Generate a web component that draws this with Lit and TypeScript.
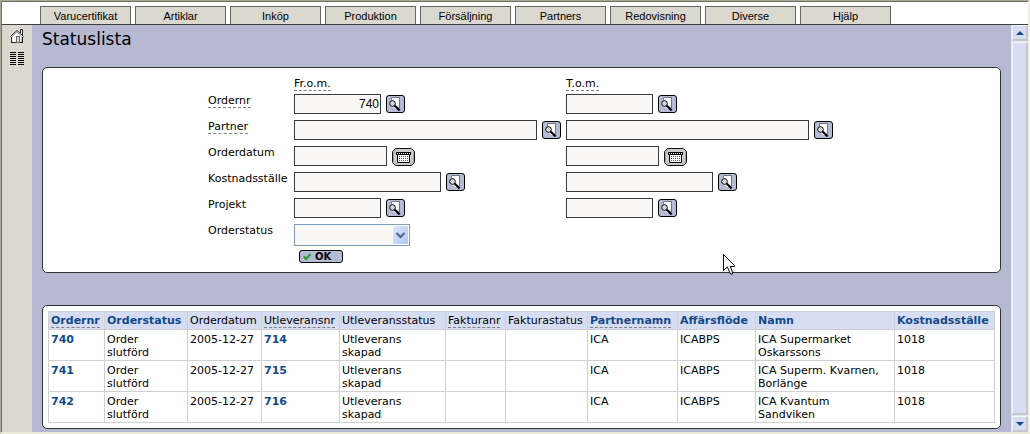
import { LitElement, html, css, svg, nothing } from "lit";
import { customElement } from "lit/decorators.js";
import { classMap } from "lit/directives/class-map.js";

const TABS = ["Varucertifikat", "Artiklar", "Inköp", "Produktion", "Försäljning", "Partners", "Redovisning", "Diverse", "Hjälp"];

interface Field {
  id: string;
  label: string;
  hint?: boolean;
  size: "short" | "date" | "medium" | "long";
  from?: string;
}

const FIELDS: Field[] = [
  { id: "ordernr", label: "Ordernr", hint: true, size: "short", from: "740" },
  { id: "partner", label: "Partner", hint: true, size: "long" },
  { id: "orderdatum", label: "Orderdatum", size: "date" },
  { id: "kostnadsstalle", label: "Kostnadsställe", size: "medium" },
  { id: "projekt", label: "Projekt", size: "short" },
];

interface Column {
  title: string;
  width: number;
  sortable?: boolean;
  hint?: boolean;
  link?: boolean;
}

const COLUMNS: Column[] = [
  { title: "Ordernr", width: 56, sortable: true, hint: true, link: true },
  { title: "Orderstatus", width: 83, sortable: true },
  { title: "Orderdatum", width: 74 },
  { title: "Utleveransnr", width: 78, hint: true, link: true },
  { title: "Utleveransstatus", width: 106 },
  { title: "Fakturanr", width: 60, hint: true },
  { title: "Fakturastatus", width: 82 },
  { title: "Partnernamn", width: 90, sortable: true, hint: true },
  { title: "Affärsflöde", width: 78, sortable: true },
  { title: "Namn", width: 139, sortable: true },
  { title: "Kostnadsställe", width: 100, sortable: true },
];

const ROWS: string[][] = [
  ["740", "Order\nslutförd", "2005-12-27", "714", "Utleverans\nskapad", "", "", "ICA", "ICABPS", "ICA Supermarket\nOskarssons", "1018"],
  ["741", "Order\nslutförd", "2005-12-27", "715", "Utleverans\nskapad", "", "", "ICA", "ICABPS", "ICA Superm. Kvarnen,\nBorlänge", "1018"],
  ["742", "Order\nslutförd", "2005-12-27", "716", "Utleverans\nskapad", "", "", "ICA", "ICABPS", "ICA Kvantum\nSandviken", "1018"],
];

const searchIcon = html`<svg width="19" height="18" viewBox="0 0 19 18" aria-hidden="true">
  <rect x="0.5" y="0.5" width="18" height="17" rx="2.5" fill="#b5bbd3" stroke="#000" />
  <path d="M6 3h7v11H9L6 11z" fill="#fff" />
  <path d="M5.5 5V2.5H13.5V13" fill="none" stroke="#777" />
  <circle cx="6.5" cy="8.5" r="2.8" fill="#eceeee" stroke="#000" />
  <path d="M5 8h1v1H5zM7 8h1v1H7zM6 7h1v1H6zM6 9h1v1H6z" fill="#c2c8c8" />
  <path d="M8.5 10.5L13.7 15.4" stroke="#000" stroke-width="2.2" />
</svg>`;

const dots: number[][] = [];
for (let y = 8; y <= 12; y += 2) for (let x = 8; x <= 16; x += 2) dots.push([x, y]);

const calendarIcon = html`<svg width="23" height="18" viewBox="0 0 23 18" aria-hidden="true">
  <rect x="0.5" y="0.5" width="22" height="17" rx="4.5" fill="#c9cacf" stroke="#111" />
  <path d="M1.5 13V5Q1.5 1.5 5 1.5M21.5 5V13Q21.5 16.5 18 16.5" fill="none" stroke="#a4a5a9" />
  <path d="M5.5 6.5h12v8h-12z" fill="#fff" stroke="#000" />
  <path d="M4 4h15v3H4z" fill="#000" />
  <path d="M5 5.5h13" stroke="#fff" stroke-dasharray="1 1" />
  ${dots.map(([x, y]) => svg`<rect x=${x - 1} y=${y} width="1" height="1" fill="#2f5fd0" />`)}
</svg>`;

const homeIcon = html`<svg width="15" height="15" viewBox="0 0 15 15" aria-hidden="true">
  <path d="M2 8V14H13V8L7.5 2z" fill="#f4f4f2" />
  <path d="M10.5 4V0.5H12.5V6" fill="#fff" stroke="#222" />
  <path d="M0.5 7.5L7 1.5L13.5 7.5" fill="none" stroke="#222" />
  <path d="M1.5 8.5L7 3L12.5 8.5" fill="none" stroke="#aaa" />
  <path d="M1.5 8V13.5M12.5 8V14M1 13.5H13" stroke="#222" fill="none" />
  <path d="M11.5 8.5V13" stroke="#bbb" />
  <rect x="6.5" y="7.5" width="3" height="6" fill="#d8d8d8" stroke="#666" />
</svg>`;

const listIcon = html`<svg width="14" height="13" viewBox="0 0 14 13" aria-hidden="true">
  ${[0, 2, 4, 6, 8, 10, 12].map((y) => svg`<path d=${`M0 ${y}h6v1H0zM8 ${y}h6v1H8z`} fill="#000" />`)}
</svg>`;

@customElement("app-root")
class AppRoot extends LitElement {
  static styles = css`
    :host {
      display: block;
      color: #000;
      font: 11px/13px "DejaVu Sans", Verdana, sans-serif;
    }
    .frame {
      box-sizing: border-box;
      min-height: 100vh;
      display: flex;
      flex-direction: column;
      border-style: solid;
      border-width: 1px 2px 2px 1px;
      border-color: #aca899 #f1efe2 #ece9d8 #aca899;
    }
    .window {
      flex: 1;
      display: flex;
      flex-direction: column;
      border-top: 1px solid #716f64;
      border-left: 1px solid #716f64;
    }
    .tabs {
      display: flex;
      gap: 4px;
      padding: 4px 0 0 38px;
      background: #fff;
      border-bottom: 1px solid #3f3f3f;
    }
    .tab {
      box-sizing: border-box;
      width: 91px;
      height: 18px;
      border: 1px solid #63665f;
      border-bottom: 0;
      background: #dbd8d0;
      color: #000;
      font: 11px/18px "Liberation Sans", Arial, sans-serif;
      text-align: center;
      text-decoration: none;
    }
    .body { flex: 1; display: flex; }
    .side {
      width: 30px;
      background: #dbd8d0;
      display: flex;
      flex-direction: column;
      align-items: center;
      gap: 8px;
      padding-top: 4px;
      box-sizing: border-box;
    }
    .side a, .side svg { display: block; }
    .main { flex: 1; min-width: 0; background: #b5bad2; padding: 4px 10px 3px; }
    .title { margin: 0; font-size: 17px; line-height: 20px; font-weight: 400; }
    .panel {
      box-sizing: border-box;
      border: 1px solid #333;
      border-radius: 5px;
      background: #fff;
    }
    .search { margin-top: 18px; padding: 9px 0; position: relative; }
    .form {
      display: grid;
      grid-template-columns: 86px 272px 269px;
      grid-template-rows: 17px repeat(6, 26px) 13px;
      justify-content: center;
    }
    .hint { border-bottom: 1px dashed #808080; }
    .from { grid-column: 2; }
    .group { display: flex; align-items: center; align-self: start; gap: 5px; }
    .group.date { align-items: flex-end; }
    .box {
      box-sizing: border-box;
      height: 20px;
      border: 1px solid #3a3a3a;
      border-radius: 0;
      margin: 0;
      padding: 0 1px;
      background: #f9f8f6;
      color: #000;
      font: 12px "Liberation Sans", Arial, sans-serif;
      text-align: right;
      outline: none;
    }
    .short .box { width: 87px; }
    .date .box { width: 93px; }
    .medium .box { width: 147px; }
    .long .box { width: 243px; }
    .pick { display: block; border: 0; padding: 0; margin: 0; background: none; cursor: pointer; }
    .pick svg { display: block; }
    .select {
      width: 116px;
      height: 22px;
      display: grid;
      align-items: center;
    }
    .select select, .select .arrow { grid-area: 1 / 1; }
    .select select {
      appearance: none;
      width: 100%;
      height: 100%;
      box-sizing: border-box;
      margin: 0;
      border: 1px solid #7f9db9;
      border-radius: 0;
      background: #f9f8f6;
      font: 11px "Liberation Sans", Arial, sans-serif;
    }
    .select .arrow { justify-self: end; margin-right: 1px; pointer-events: none; }
    .ok {
      display: flex;
      align-items: center;
      gap: 4px;
      width: 44px;
      height: 13px;
      box-sizing: border-box;
      margin: 0 0 0 5px;
      padding: 0 3px;
      border: 1px solid #000;
      border-radius: 3px;
      background: #b5bbd3;
      color: #000;
      font: bold 10px/11px "DejaVu Sans", Verdana, sans-serif;
    }
    .pointer { position: absolute; left: 680px; top: 186px; pointer-events: none; }
    .result { margin-top: 32px; padding: 5px; }
    .grid { width: 100%; table-layout: fixed; border-collapse: collapse; }
    .cell {
      border: 1px solid #d0d0d0;
      padding: 3px 2px 1px;
      text-align: left;
      vertical-align: top;
      font-weight: 400;
      white-space: pre-line;
    }
    .head { padding: 2px; background: #d6dcf2; white-space: nowrap; }
    .strong { color: #134a8a; font-weight: 700; text-decoration: none; }
    .scroll {
      width: 17px;
      box-sizing: border-box;
      padding-left: 1px;
      display: flex;
      flex-direction: column;
      gap: 1px;
      background: #dfe3f3;
    }
    .piece {
      box-sizing: border-box;
      width: 16px;
      margin: 0;
      padding: 0;
      border: 1px solid;
      border-color: #f4f6fc #c4c8cc #c4c8cc #f4f6fc;
      border-right-width: 2px;
      border-bottom-width: 2px;
      border-radius: 0;
      background: #d6dcf2;
      display: flex;
      align-items: center;
      justify-content: center;
    }
    .step { height: 16px; }
    .thumb { flex: 1; }
  `;

  renderBox(f: Field, end: "from" | "tom") {
    const isDate = f.size === "date";
    return html`<div class="group ${f.size}">
      <input class="box" type="text" id="${f.id}-${end}" aria-label=${end === "tom" ? `${f.label} t.o.m.` : nothing}
        .value=${end === "from" ? f.from ?? "" : ""} />
      <button class="pick" type="button" aria-label=${isDate ? "Välj datum" : "Sök"}>${isDate ? calendarIcon : searchIcon}</button>
    </div>`;
  }

  renderField(f: Field) {
    return html`
      <div><label class=${classMap({ hint: !!f.hint })} for="${f.id}-from">${f.label}</label></div>
      ${this.renderBox(f, "from")}
      ${this.renderBox(f, "tom")}`;
  }

  renderHead(c: Column) {
    const cls = classMap({ hint: !!c.hint, strong: !!c.sortable });
    return html`<th class="cell head" scope="col">${c.sortable
      ? html`<a class=${cls} href="#">${c.title}</a>`
      : html`<span class=${cls}>${c.title}</span>`}</th>`;
  }

  render() {
    return html`<div class="frame"><div class="window">
      <nav class="tabs">${TABS.map((t) => html`<a class="tab" href="#">${t}</a>`)}</nav>
      <div class="body">
        <aside class="side">
          <a href="#" aria-label="Hem">${homeIcon}</a>
          <a href="#" aria-label="Lista">${listIcon}</a>
        </aside>
        <main class="main">
          <h1 class="title">Statuslista</h1>
          <section class="panel search">
            <form class="form" @submit=${(e: Event) => e.preventDefault()}>
              <div class="from"><span class="hint">Fr.o.m.</span></div>
              <div><span class="hint">T.o.m.</span></div>
              ${FIELDS.map((f) => this.renderField(f))}
              <label for="status">Orderstatus</label>
              <div class="from select">
                <select id="status"><option></option></select>
                <svg class="arrow" width="17" height="20" viewBox="0 0 17 20" aria-hidden="true">
                  <defs><linearGradient id="g" x1="0" y1="0" x2="1" y2="1">
                    <stop offset="0" stop-color="#dce6fd" /><stop offset="1" stop-color="#aec8f7" />
                  </linearGradient></defs>
                  <rect width="17" height="20" fill="#fff" />
                  <rect x="1" y="1" width="15" height="18" rx="1" fill="url(#g)" />
                  <path d="M4.5 8L8.5 12L12.5 8" fill="none" stroke="#4d6185" stroke-width="2" />
                </svg>
              </div>
              <button class="ok from" type="submit">
                <svg width="8" height="8" viewBox="0 0 8 8" aria-hidden="true"><path d="M0.7 3.5L3 6L7.3 1.2" fill="none" stroke="#259a2f" stroke-width="2" /></svg>OK
              </button>
            </form>
            <svg class="pointer" width="12" height="21" viewBox="0 0 12 21" aria-hidden="true">
              <path d="M0.5 0.5V16.5L4.3 12.9L7.5 20H9.5V18L7.2 12.5H11.5V11.5z" fill="#fff" stroke="#000" />
            </svg>
          </section>
          <section class="panel result">
            <table class="grid">
              <colgroup>${COLUMNS.map((c) => html`<col style="width:${c.width}px" />`)}</colgroup>
              <thead><tr>${COLUMNS.map((c) => this.renderHead(c))}</tr></thead>
              <tbody>${ROWS.map((r) => html`<tr>${r.map((v, i) => html`<td class="cell">${
                !v ? nothing : COLUMNS[i].link ? html`<a class="strong" href="#">${v}</a>` : v}</td>`)}</tr>`)}</tbody>
            </table>
          </section>
        </main>
        <div class="scroll">
          <button class="piece step" type="button" aria-label="Rulla upp"><svg width="8" height="4" viewBox="0 0 8 4"><path d="M4 0L8 4H0z" fill="#134a8a" /></svg></button>
          <div class="piece thumb"></div>
          <button class="piece step" type="button" aria-label="Rulla ned"><svg width="8" height="4" viewBox="0 0 8 4"><path d="M0 0H8L4 4z" fill="#134a8a" /></svg></button>
        </div>
      </div>
    </div></div>`;
  }
}
